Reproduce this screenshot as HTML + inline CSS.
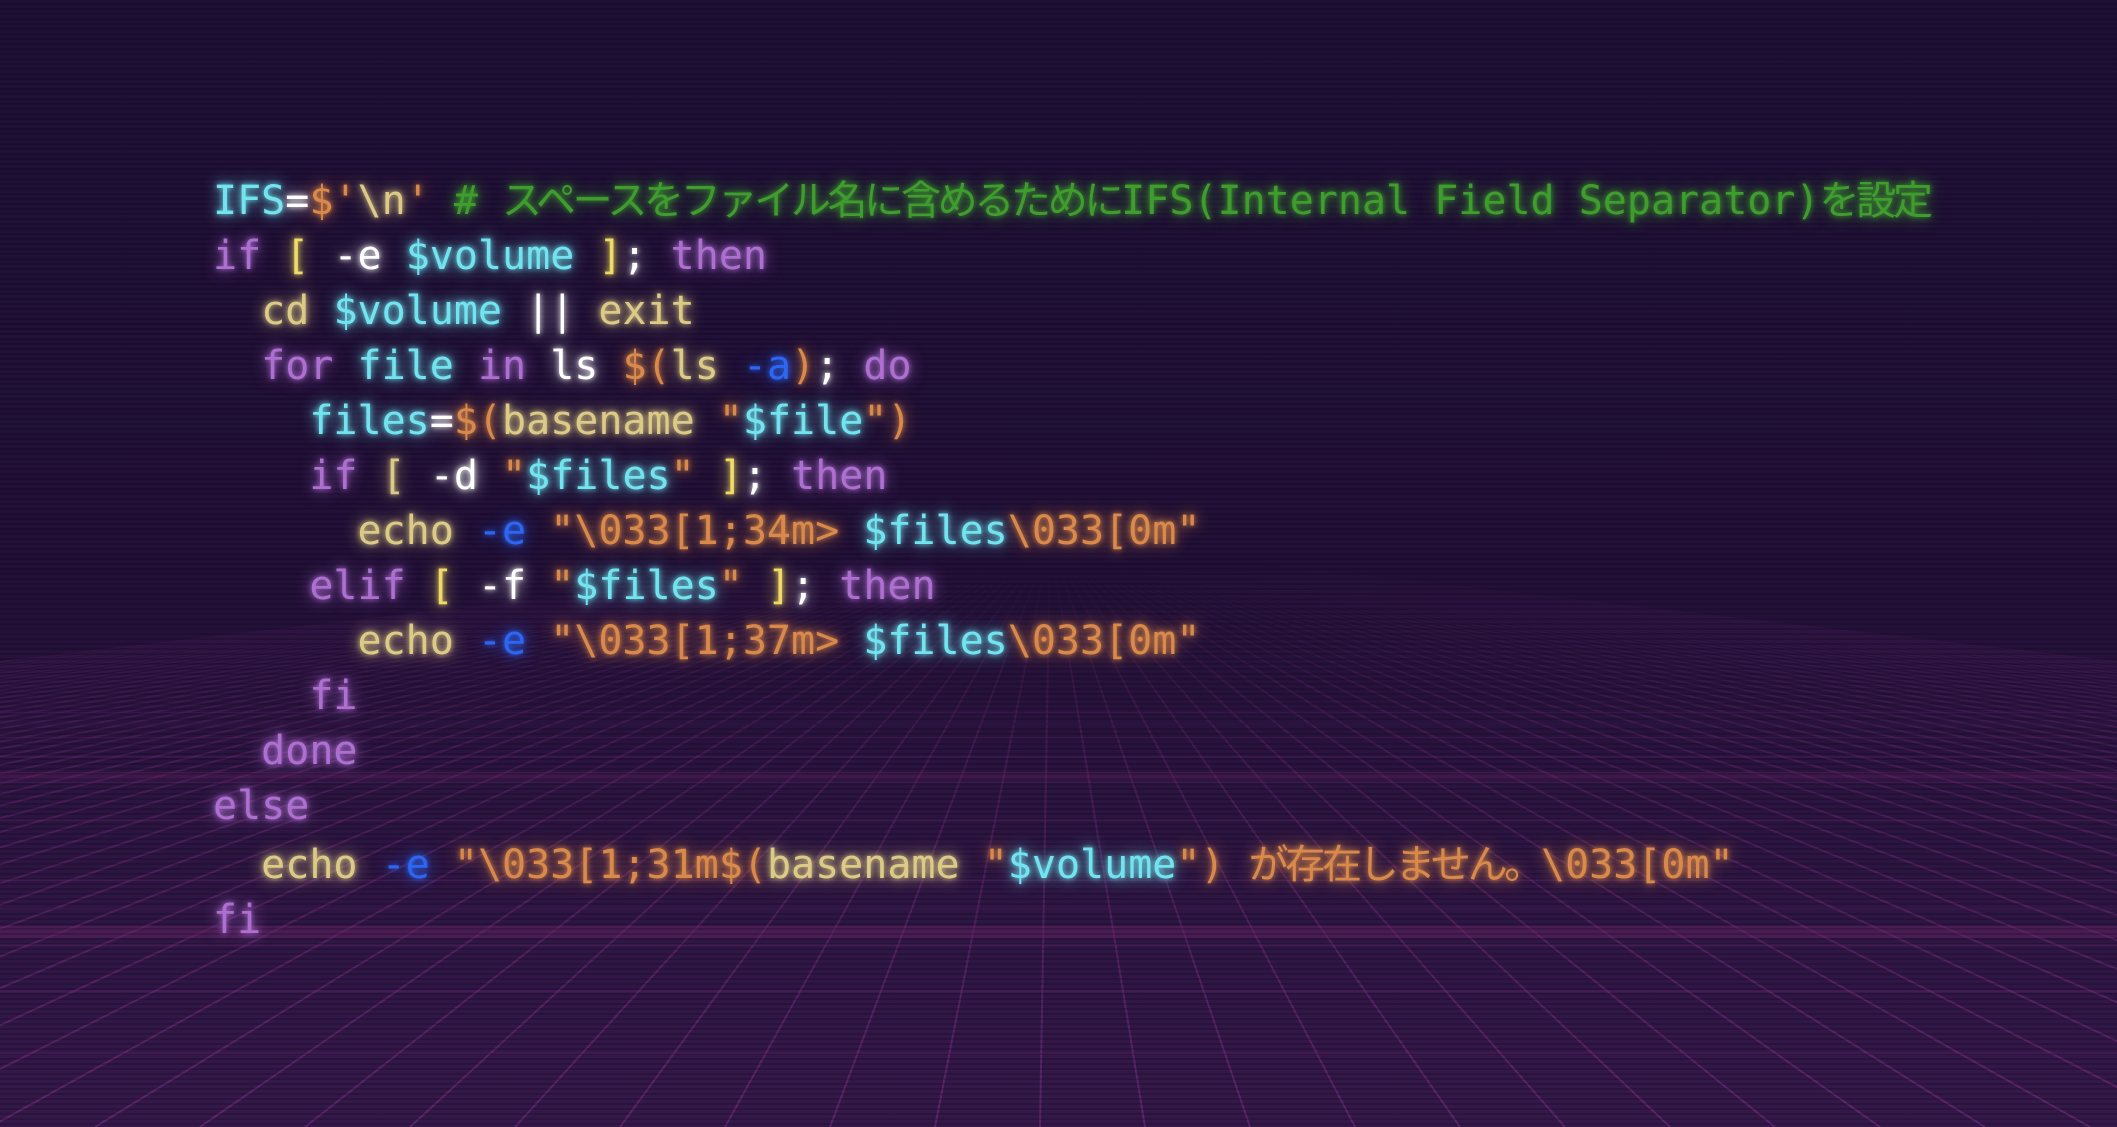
<!DOCTYPE html>
<html><head><meta charset="utf-8"><style>
html,body{margin:0;padding:0}
body{width:2117px;height:1127px;overflow:hidden;position:relative;
background:linear-gradient(180deg,#1f0f36 0%,#221038 50%,#2b1440 70%,#34184a 100%);}
#grid{position:absolute;left:0;top:0}
.scan{position:absolute;inset:0;background:repeating-linear-gradient(180deg,rgba(0,0,0,0) 0px,rgba(0,0,0,0) 3px,rgba(0,0,0,0.18) 3px,rgba(0,0,0,0.18) 5px);}
pre{position:absolute;left:213px;top:170px;margin:0;font-family:"DejaVu Sans Mono","Liberation Mono","Noto Sans CJK JP",monospace;font-size:40px;line-height:55px;color:#fff;}
pre span{text-shadow:0 0 6px currentColor,0 0 16px currentColor;}
.c{color:#72e4ef}.o{color:#d9894a}.t{color:#dccb86}.g{color:#3f9d2e}.p{color:#ad6fd0}.w{color:#fff}.b{color:#2d66f2}.y{color:#f0db66}
.j{font-family:"Noto Sans CJK JP",sans-serif;letter-spacing:-3.3px}
</style></head><body>
<svg id="grid" width="2117" height="1127"></svg>
<div class="scan"></div>
<pre><span class="c">IFS</span><span class="w">=</span><span class="o">$'</span><span class="t">\n</span><span class="o">'</span> <span class="g"># <span class="j">スペースをファイル名に含めるために</span>IFS(Internal Field Separator)<span class="j">を設定</span></span>
<span class="p">if</span> <span class="y">[</span> <span class="w">-e</span> <span class="c">$volume</span> <span class="y">]</span><span class="w">;</span> <span class="p">then</span>
  <span class="t">cd</span> <span class="c">$volume</span> <span class="w">||</span> <span class="t">exit</span>
  <span class="p">for</span> <span class="c">file</span> <span class="p">in</span> <span class="w">ls</span> <span class="o">$(</span><span class="t">ls</span> <span class="b">-a</span><span class="o">)</span><span class="w">;</span> <span class="p">do</span>
    <span class="c">files</span><span class="w">=</span><span class="o">$(</span><span class="t">basename</span> <span class="o">"</span><span class="c">$file</span><span class="o">")</span>
    <span class="p">if</span> <span class="t">[</span> <span class="w">-d</span> <span class="o">"</span><span class="c">$files</span><span class="o">"</span> <span class="y">]</span><span class="w">;</span> <span class="p">then</span>
      <span class="t">echo</span> <span class="b">-e</span> <span class="o">"\033[1;34m&gt; </span><span class="c">$files</span><span class="o">\033[0m"</span>
    <span class="p">elif</span> <span class="y">[</span> <span class="w">-f</span> <span class="o">"</span><span class="c">$files</span><span class="o">"</span> <span class="y">]</span><span class="w">;</span> <span class="p">then</span>
      <span class="t">echo</span> <span class="b">-e</span> <span class="o">"\033[1;37m&gt; </span><span class="c">$files</span><span class="o">\033[0m"</span>
    <span class="p">fi</span>
  <span class="p">done</span>
<span class="p">else</span>
  <span class="t">echo</span> <span class="b">-e</span> <span class="o">"\033[1;31m$(</span><span class="t">basename</span> <span class="o">"</span><span class="c">$volume</span><span class="o">") <span class="j">が存在しません。</span>\033[0m"</span>
<span class="p">fi</span></pre>
<script>
var s=document.getElementById('grid'),vx=1050,vy=540,top0=560;
var h='<defs><linearGradient id="fg" x1="0" y1="0" x2="0" y2="1127" gradientUnits="userSpaceOnUse"><stop offset="0.5" stop-color="#fff" stop-opacity="0"/><stop offset="0.66" stop-color="#fff" stop-opacity="0.5"/><stop offset="1" stop-color="#fff" stop-opacity="1"/></linearGradient><mask id="m"><rect width="2117" height="1127" fill="url(#fg)"/></mask></defs><g mask="url(#m)">';
for(var x=-4000;x<=6200;x+=105){
  var t=(top0-vy)/(1127-vy);var sx=vx+(x-vx)*t;
  h+='<line x1="'+sx+'" y1="'+top0+'" x2="'+x+'" y2="1127" stroke="#7a2e80" stroke-opacity="0.6" stroke-width="2"/>';
}
for(var d=4;d<30;d+=d<10?1:3){
  var y=620+2600/d;if(y>1127)continue;
  h+='<line x1="0" y1="'+y+'" x2="2117" y2="'+y+'" stroke="#7a2e80" stroke-opacity="0.35" stroke-width="2"/>';
}
h+='</g>';
h+='<rect x="0" y="772" width="2117" height="8" fill="#6a2468" opacity="0.3"/>';
h+='<rect x="0" y="926" width="2117" height="12" fill="#6a2468" opacity="0.45"/>';
s.innerHTML=h;
</script>
</body></html>
